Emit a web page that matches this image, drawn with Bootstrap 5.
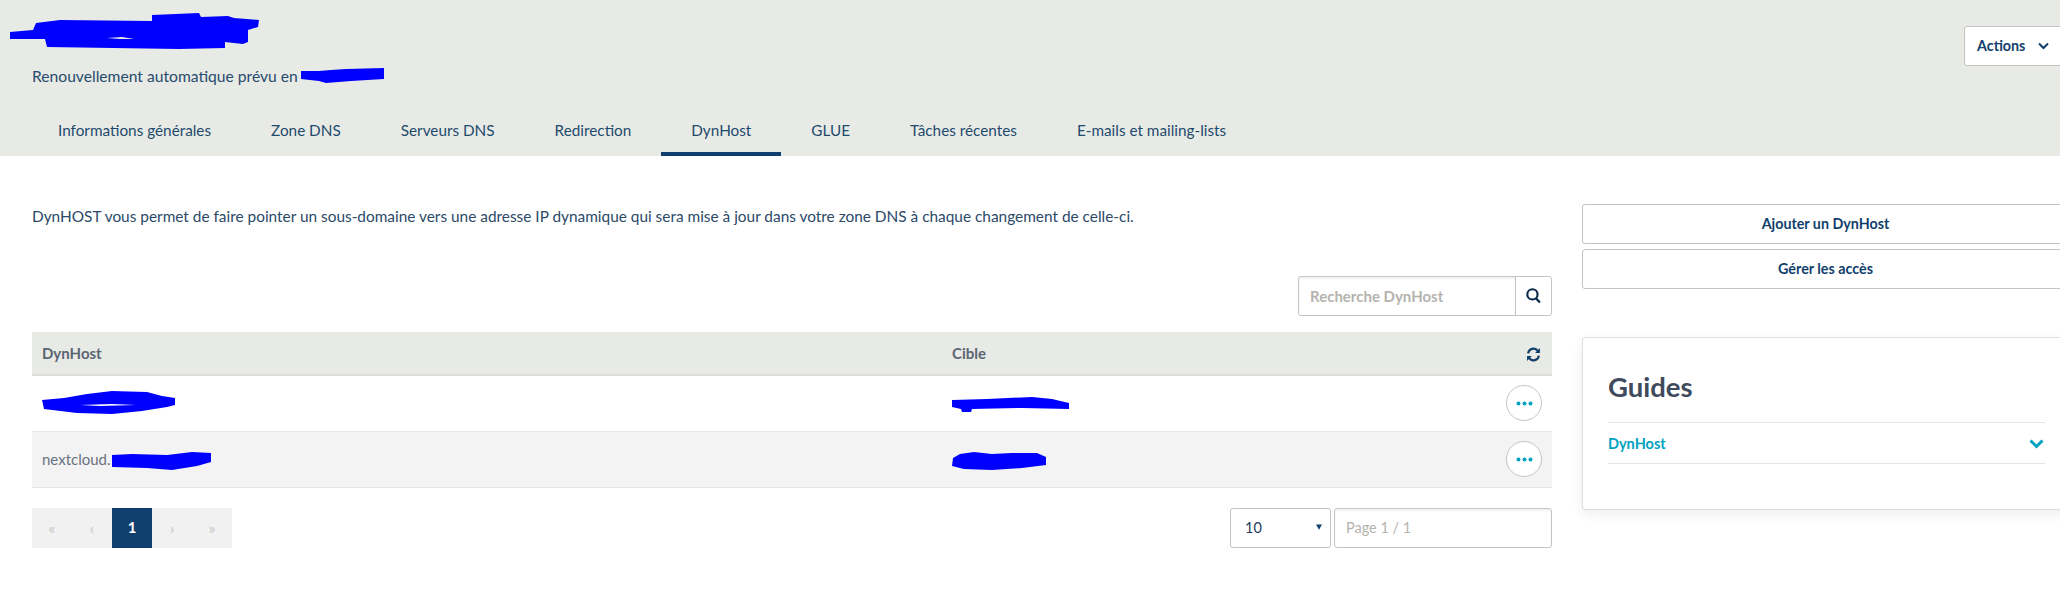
<!DOCTYPE html>
<html lang="fr">
<head>
<meta charset="utf-8">
<title>DynHost</title>
<link href="https://cdn.jsdelivr.net/npm/bootstrap@5.3.0/dist/css/bootstrap.min.css" rel="stylesheet">
<style>
html,body{overflow:hidden;height:603px;background:#fff}
body{font-family:"Lato","Liberation Sans",sans-serif;font-size:15.4px;color:#1f3d5c}
.scrib{display:block;fill:#00f}
.scrib-in{display:inline-block;vertical-align:middle;fill:#00f}
.scrib-low{margin-top:4px}
.top-band{background:#e8eae5;height:156px;display:flex;flex-direction:column}
.top-row{height:104px;display:flex;justify-content:space-between;align-items:flex-start}
.title-scrib{margin:13px 0 0 10px}
.renew{margin:12px 0 0 32px;line-height:28px;color:#274b6d;display:flex;align-items:center;gap:3px;font-size:15.65px}
.act-btn{margin:26px -10px 0 0;width:106px;height:40px;background:#fff;border:1px solid #c4c4c4;border-radius:3px;color:#113f6d;font-weight:700;font-size:14.3px;padding:0 12px;display:flex;align-items:center;justify-content:flex-start;gap:13px}
.act-btn:hover{background:#fff;color:#113f6d;border-color:#c4c4c4}
.tab-row{padding-left:28px;height:52px;flex-wrap:nowrap}
.tab-row .nav-link{padding:16px 30px 0;height:52px;color:#1f4a6e;border-bottom:4px solid transparent;line-height:20px;font-size:15.3px}
.tab-row .nav-link.active{border-bottom-color:#113f6d}
.main-flow{display:flex;gap:30px;padding-left:32px}
.left-col{width:1520px;flex:none;padding-top:50px}
.intro{line-height:20px;margin:0 0 50px;color:#2c4a68}
.search-row{display:flex;justify-content:flex-end;margin-bottom:16px}
.search-box{width:254px;height:40px}
.search-box .form-control{height:40px;border-color:#c4c4c4;border-radius:3px 0 0 3px;box-shadow:inset 0 2px 2px rgba(0,0,0,.05);padding:0 11px;font-size:15px}
.search-box .form-control::placeholder{color:#b5b3ae;font-weight:700}
.search-box .btn{width:37px;padding:0;height:40px;border:1px solid #c4c4c4;background:#fff;border-radius:0 3px 3px 0;display:flex;align-items:center;justify-content:center}
.host-table{margin-bottom:20px;table-layout:fixed;width:1520px}
.host-table th{background:#e8eae5;height:43px;padding:0 10px;border-bottom:2px solid #dcdcd8;color:#5b6573;vertical-align:middle;font-weight:700;font-size:15px}
.host-table td{height:56px;padding:0 10px;vertical-align:middle;border-bottom:1px solid #e6e6e6;color:#6a7280;font-size:15px}
.host-table tr.alt td{background:#f3f3f3}
.dots-btn{width:36px;height:36px;border:1px solid #c4c4c4;border-radius:50%;background:#fff;padding:0;display:inline-flex;align-items:center;justify-content:center;vertical-align:middle}
.cell-flex{display:flex;align-items:center;gap:1px}
.foot-row{display:flex;justify-content:space-between}
.pager{margin:0;background:#f1f1f1;border-radius:3px;overflow:hidden}
.pager .page-item:not(:first-child) .page-link,.pager .page-item .page-link{width:40px;height:40px;padding:0;display:flex;align-items:center;justify-content:center;background:#f1f1f1;border:0;color:#c5c5c5;font-size:16px;margin:0;border-radius:0}
.pager .page-item.active .page-link{background:#113f6d;color:#fff;font-weight:700;font-size:15px}
.foot-forms{display:flex;gap:3px}
.size-sel{width:101px;height:40px;border-color:#c4c4c4;border-radius:3px;padding:0 14px;color:#1f3d5c;font-size:14.5px;background-position:right 8px top 15px;background-size:6px 6px;background-image:url("data:image/svg+xml,%3Csvg xmlns='http://www.w3.org/2000/svg' viewBox='0 0 8 7'%3E%3Cpath fill='%23113f6d' d='M0 0h8L4 7z'/%3E%3C/svg%3E")}
.page-inp{width:218px;height:40px;border-color:#c4c4c4;border-radius:3px;padding:0 11px;font-size:14.5px;box-shadow:inset 0 2px 2px rgba(0,0,0,.05)}
.page-inp::placeholder{color:#b5b3ae}
.right-col{width:487px;flex:none;padding-top:48px}
.side-btn{display:block;width:100%;height:40px;background:#fff;border:1px solid #c4c4c4;border-radius:3px;color:#113f6d;font-weight:700;font-size:14.3px;padding:0;margin-bottom:5px;line-height:38px}
.side-btn:hover{background:#fff;color:#113f6d;border-color:#c4c4c4}
.guide-card{margin-top:48px;height:173px;border:1px solid #dedede;border-radius:3px;box-shadow:0 4px 12px rgba(0,0,0,.07);padding:0 25px}
.guide-title{font-family:"Lato",sans-serif;font-size:27.5px;font-weight:700;color:#3f4a5c;line-height:34px;margin:32px 0 18px}
.guide-line{width:437px;height:42px;border-top:1px solid #e5e5e5;border-bottom:1px solid #e5e5e5;display:flex;align-items:center;justify-content:space-between;color:#00a2bf;font-weight:700;font-size:14.5px;text-decoration:none;padding:1px 1px 0 0}
</style>
</head>
<body>
<div class="top-band">
  <div class="top-row">
    <div>
      <svg class="title-scrib scrib" width="250" height="37" viewBox="0 0 250 37"><path fill-rule="evenodd" d="M0 19 23 17 26 10 50 7 142 8 142 2 189 0 191 4 218 3 224 5 249 7 248 14 238 17 238 29 233 31 215 29 215 35 169 36 37 34 35 26 0 26ZM97 25 112 24 124 26 110 26Z"/></svg>
      <div class="renew">Renouvellement automatique prévu en <svg class="scrib-in" width="84" height="16" viewBox="0 0 84 16"><path d="M0 3 18 3 30 2 45 1 83 0 83 11 50 13 25 15 18 13 0 11Z"/></svg></div>
    </div>
    <button type="button" class="btn act-btn">Actions
      <svg width="11" height="8" viewBox="0 0 11 8"><path d="M1 1.500 5.500 6 10 1.500" fill="none" stroke="#113f6d" stroke-width="2"/></svg>
    </button>
  </div>
  <ul class="nav tab-row">
    <li class="nav-item"><a class="nav-link" href="#">Informations générales</a></li>
    <li class="nav-item"><a class="nav-link" href="#">Zone DNS</a></li>
    <li class="nav-item"><a class="nav-link" href="#">Serveurs DNS</a></li>
    <li class="nav-item"><a class="nav-link" href="#">Redirection</a></li>
    <li class="nav-item"><a class="nav-link active" href="#">DynHost</a></li>
    <li class="nav-item"><a class="nav-link" href="#">GLUE</a></li>
    <li class="nav-item"><a class="nav-link" href="#">Tâches récentes</a></li>
    <li class="nav-item"><a class="nav-link" href="#">E-mails et mailing-lists</a></li>
  </ul>
</div>
<div class="main-flow">
  <div class="left-col">
    <p class="intro">DynHOST vous permet de faire pointer un sous-domaine vers une adresse IP dynamique qui sera mise à jour dans votre zone DNS à chaque changement de celle-ci.</p>
    <div class="search-row">
      <div class="input-group search-box flex-nowrap">
        <input class="form-control" type="text" placeholder="Recherche DynHost">
        <button class="btn" type="button" aria-label="Rechercher">
          <svg width="15" height="16" viewBox="0 0 14 15"><circle cx="6" cy="6" r="4.800" fill="none" stroke="#0b2a4a" stroke-width="2"/><path d="M9.500 9.800 13 13.600" stroke="#0b2a4a" stroke-width="2.200"/></svg>
        </button>
      </div>
    </div>
    <table class="table host-table">
      <colgroup><col style="width:910px"><col><col style="width:70px"></colgroup>
      <thead><tr><th>DynHost</th><th>Cible</th><th class="text-end">
        <svg width="15" height="15" viewBox="0 0 14 14" style="margin-right:1px"><path d="M2 6A5 5 0 0 1 11 3.600" fill="none" stroke="#113f6d" stroke-width="2"/><path d="M13 1v4.500H8.500Z" fill="#113f6d"/><path d="M12 8A5 5 0 0 1 3 10.400" fill="none" stroke="#113f6d" stroke-width="2"/><path d="M1 13V8.500H5.500Z" fill="#113f6d"/></svg>
      </th></tr></thead>
      <tbody>
        <tr>
          <td><svg class="scrib" width="134" height="24" viewBox="0 0 134 24"><path fill-rule="evenodd" d="M0 9 22 7 45 3 70 0 105 1 120 5 133 7 133 14 125 16 100 20 70 23 35 22 2 18ZM38 14 58 15 94 14 70 13Z"/></svg></td>
          <td><svg class="scrib scrib-low" width="118" height="16" viewBox="0 0 118 16"><path d="M0 3 35 2 80 0 100 2 117 6 117 12 70 11 20 12 19 15 10 15 9 12 0 10Z"/></svg></td>
          <td class="text-end"><button type="button" class="btn dots-btn" aria-label="Options"><svg width="17" height="5" viewBox="0 0 17 5"><circle cx="2.500" cy="2.500" r="2" fill="#00a2bf"/><circle cx="8.500" cy="2.500" r="2" fill="#00a2bf"/><circle cx="14.500" cy="2.500" r="2" fill="#00a2bf"/></svg></button></td>
        </tr>
        <tr class="alt">
          <td><div class="cell-flex">nextcloud.<svg class="scrib-in scrib-low" width="100" height="19" viewBox="0 0 100 19"><path d="M0 3 20 2 55 3 80 0 99 1 99 10 85 14 60 18 35 16 0 15Z"/></svg></div></td>
          <td><svg class="scrib scrib-low" width="95" height="18" viewBox="0 0 95 18"><path d="M1 6 8 2 22 0 40 2 60 1 85 1 94 5 94 13 70 16 40 18 12 17 0 14Z"/></svg></td>
          <td class="text-end"><button type="button" class="btn dots-btn" aria-label="Options"><svg width="17" height="5" viewBox="0 0 17 5"><circle cx="2.500" cy="2.500" r="2" fill="#00a2bf"/><circle cx="8.500" cy="2.500" r="2" fill="#00a2bf"/><circle cx="14.500" cy="2.500" r="2" fill="#00a2bf"/></svg></button></td>
        </tr>
      </tbody>
    </table>
    <div class="foot-row">
      <ul class="pagination pager">
        <li class="page-item disabled"><span class="page-link">«</span></li>
        <li class="page-item disabled"><span class="page-link">‹</span></li>
        <li class="page-item active"><span class="page-link">1</span></li>
        <li class="page-item disabled"><span class="page-link">›</span></li>
        <li class="page-item disabled"><span class="page-link">»</span></li>
      </ul>
      <div class="foot-forms">
        <select class="form-select size-sel"><option>10</option></select>
        <input class="form-control page-inp" type="text" placeholder="Page 1 / 1">
      </div>
    </div>
  </div>
  <div class="right-col">
    <button type="button" class="btn side-btn">Ajouter un DynHost</button>
    <button type="button" class="btn side-btn">Gérer les accès</button>
    <div class="card guide-card">
      <h2 class="guide-title">Guides</h2>
      <a class="guide-line" href="#">DynHost
        <svg width="15" height="10" viewBox="0 0 15 10"><path d="M1.500 1.500 7.500 7.500 13.500 1.500" fill="none" stroke="#00a2bf" stroke-width="3"/></svg>
      </a>
    </div>
  </div>
</div>
</body>
</html>
